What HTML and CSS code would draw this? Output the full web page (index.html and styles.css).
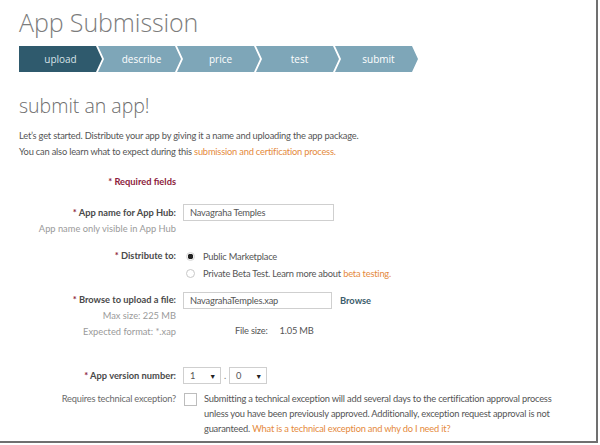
FILE: index.html
```html
<!DOCTYPE html>
<html>
<head>
<meta charset="utf-8">
<link rel="stylesheet" href="styles.css">
</head>
<body>
<div class="frame">
  <div class="page">
    <h1 class="title">App Submission</h1>
    <div class="steps">
      <div class="step first active">upload</div>
      <div class="step">describe</div>
      <div class="step">price</div>
      <div class="step">test</div>
      <div class="step">submit</div>
    </div>
    <h2 class="subtitle">submit an app!</h2>
    <div class="intro">
      <div class="line">Let’s get started. Distribute your app by giving it a name and uploading the app package.</div>
      <div class="line"><span>You can also learn what to expect during this&nbsp;</span><a class="link">submission and certification process.</a></div>
    </div>

    <div class="form">
      <div class="row req-row">
        <div class="label required">* Required fields</div>
        <div></div>
      </div>

      <div class="row name-row">
        <div class="label"><span class="lbl"><span class="star">*</span> App name for App Hub:</span><span class="hint">App name only visible in App Hub</span></div>
        <div class="field"><div class="input name-input">Navagraha Temples</div></div>
      </div>

      <div class="row dist-row">
        <div class="label"><span class="lbl"><span class="star">*</span> Distribute to:</span></div>
        <div class="field radios">
          <div class="radio-line"><span class="radio checked"></span>Public Marketplace</div>
          <div class="radio-line"><span class="radio"></span><span>Private Beta Test. Learn more about&nbsp;</span><a class="link">beta testing.</a></div>
        </div>
      </div>

      <div class="row file-row">
        <div class="label"><span class="lbl"><span class="star">*</span> Browse to upload a file:</span><span class="hint">Max size: 225 MB</span><span class="hint">Expected format: *.xap</span></div>
        <div class="field">
          <div class="file-line"><div class="input file-input">NavagrahaTemples.xap</div><span class="browse">Browse</span></div>
          <div class="filesize"><span>File size:</span><span class="size-val">1.05 MB</span></div>
        </div>
      </div>

      <div class="row ver-row">
        <div class="label"><span class="lbl"><span class="star">*</span> App version number:</span></div>
        <div class="field selects">
          <div class="select"><span>1</span><span class="caret">▼</span></div>
          <span class="dot">.</span>
          <div class="select"><span>0</span><span class="caret">▼</span></div>
        </div>
      </div>

      <div class="row exc-row">
        <div class="label"><span class="plain">Requires technical exception?</span></div>
        <div class="field exc">
          <span class="checkbox"></span>
          <div class="exc-text">
            <div class="line">Submitting a technical exception will add several days to the certification approval process</div>
            <div class="line">unless you have been previously approved. Additionally, exception request approval is not</div>
            <div class="line"><span>guaranteed.&nbsp;</span><a class="link">What is a technical exception and why do I need it?</a></div>
          </div>
        </div>
      </div>
    </div>
  </div>
</div>
</body>
</html>
```

FILE: styles.css
```css
html, body {
  margin: 0;
  padding: 0;
  background: #ffffff;
}
body {
  font-family: Lato, "Open Sans", sans-serif;
  color: #555555;
  font-size: 9.3px;
  letter-spacing: -0.2px;
}
.frame {
  width: 596px;
  height: 441px;
  border-right: 2px solid #707070;
  border-bottom: 2px solid #707070;
  overflow: hidden;
}
.page {
  padding-left: 19px;
}
.title {
  margin: 0;
  padding-top: 4px;
  font-family: "Open Sans", sans-serif;
  font-weight: 300;
  font-size: 25px;
  line-height: 36px;
  color: #7c7c7c;
  letter-spacing: -0.1px;
}
.steps {
  display: flex;
  margin-top: 6px;
  height: 26px;
}
.step {
  width: 83px;
  height: 26px;
  margin-left: -4px;
  background: #7ea6b8;
  color: #ffffff;
  display: flex;
  align-items: center;
  justify-content: center;
  padding-left: 4px;
  box-sizing: border-box;
  font-family: "Open Sans", sans-serif;
  font-size: 10px;
  letter-spacing: 0;
  clip-path: polygon(0 0, calc(100% - 6px) 0, 100% 50%, calc(100% - 6px) 100%, 0 100%, 6px 50%);
}
.step.first {
  margin-left: 0;
  padding-left: 0;
  clip-path: polygon(0 0, calc(100% - 6px) 0, 100% 50%, calc(100% - 6px) 100%, 0 100%);
}
.step.active {
  background: #2f5a6d;
  color: #d6e2e8;
}
.subtitle {
  margin: 20px 0 0 0;
  font-family: "Open Sans", sans-serif;
  font-weight: 300;
  font-size: 19.5px;
  line-height: 28px;
  color: #6e6e6e;
  letter-spacing: 0;
}
.intro {
  margin: 8px 0 0 0;
  line-height: 16px;
  color: #555555;
}
.line {
  display: flex;
  white-space: nowrap;
}
.link {
  color: #e58a3c;
}
.form {
  margin-top: 14px;
  display: flex;
  flex-direction: column;
}
.row {
  display: grid;
  grid-template-columns: 157px 1fr;
  column-gap: 7px;
}
.label {
  display: flex;
  flex-direction: column;
  align-items: flex-end;
  text-align: right;
}
.lbl {
  font-weight: 700;
  color: #4a4a4a;
  line-height: 16px;
  letter-spacing: 0;
}
.star {
  color: #8c1c3c;
}
.required {
  font-weight: 700;
  color: #8c1c3c;
  line-height: 16px;
  letter-spacing: 0;
}
.hint {
  color: #9a9a9a;
  line-height: 16px;
  letter-spacing: 0;
}
.plain {
  color: #6a6a6a;
  line-height: 16px;
}
.req-row {
  margin-bottom: 14px;
}
.name-row .label {
  padding-top: 1px;
}
.input {
  height: 17px;
  border: 1px solid #cfcfcf;
  box-sizing: border-box;
  padding: 0 6px;
  line-height: 15px;
  color: #555555;
}
.name-input {
  width: 151px;
}
.dist-row {
  margin-top: 11px;
}
.radios {
  display: flex;
  flex-direction: column;
  padding-left: 3px;
}
.radio-line {
  display: flex;
  align-items: center;
  height: 17px;
  color: #555555;
  white-space: nowrap;
}
.radio {
  width: 9px;
  height: 9px;
  border-radius: 50%;
  border: 1px solid #c8c8c8;
  box-sizing: border-box;
  margin-right: 8px;
  flex: none;
}
.radio.checked {
  border-color: #d8d8d8;
  background: radial-gradient(circle, #222 0 2.6px, #f4f4f4 3px);
}
.file-row {
  margin-top: 10px;
}
.file-line {
  display: flex;
  align-items: center;
}
.file-input {
  width: 149px;
}
.browse {
  margin-left: 8px;
  font-weight: 700;
  color: #3b5d6c;
  letter-spacing: 0;
}
.filesize {
  margin-top: 14px;
  margin-left: 52px;
  display: flex;
  gap: 12px;
  color: #555555;
  line-height: 16px;
}
.ver-row {
  margin-top: 27px;
  align-items: center;
}
.selects {
  display: flex;
  align-items: center;
}
.select {
  width: 38px;
  height: 17px;
  border: 1px solid #cfcfcf;
  box-sizing: border-box;
  display: flex;
  justify-content: space-between;
  align-items: center;
  padding: 0 4px 0 6px;
  color: #555;
}
.caret {
  font-size: 7px;
  color: #222;
}
.dot {
  margin: 0 3px;
  color: #777;
}
.exc-row {
  margin-top: 7px;
}
.exc {
  display: flex;
  align-items: flex-start;
}
.checkbox {
  width: 13px;
  height: 13px;
  border: 1px solid #bdbdbd;
  box-sizing: border-box;
  margin: 2px 7px 0 1px;
  flex: none;
}
.exc-text {
  display: flex;
  flex-direction: column;
  line-height: 15px;
  color: #555555;
}
```
